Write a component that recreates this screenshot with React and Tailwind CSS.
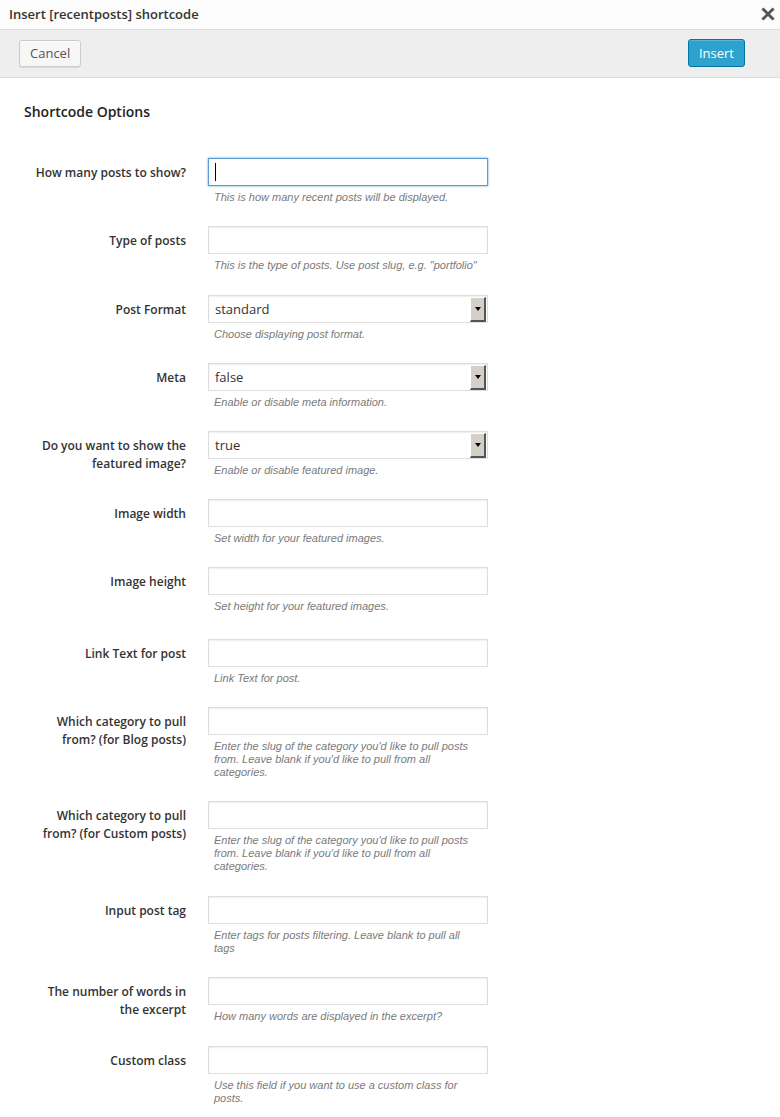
import React from "react";

const rows = [
  { label: ["How many posts to show?"], type: "focus", desc: ["This is how many recent posts will be displayed."] },
  { label: ["Type of posts"], type: "input", desc: ['This is the type of posts. Use post slug, e.g. "portfolio"'], mb: "mb-[1px]" },
  { label: ["Post Format"], type: "select", value: "standard", desc: ["Choose displaying post format."] },
  { label: ["Meta"], type: "select", value: "false", desc: ["Enable or disable meta information."] },
  { label: ["Do you want to show the", "featured image?"], type: "select", value: "true", desc: ["Enable or disable featured image."] },
  { label: ["Image width"], type: "input", desc: ["Set width for your featured images."] },
  { label: ["Image height"], type: "input", desc: ["Set height for your featured images."], mb: "mb-[4px]" },
  { label: ["Link Text for post"], type: "input", desc: ["Link Text for post."] },
  {
    label: ["Which category to pull", "from? (for Blog posts)"],
    type: "input",
    desc: ["Enter the slug of the category you'd like to pull posts", "from. Leave blank if you'd like to pull from all", "categories."],
  },
  {
    label: ["Which category to pull", "from? (for Custom posts)"],
    type: "input",
    desc: ["Enter the slug of the category you'd like to pull posts", "from. Leave blank if you'd like to pull from all", "categories."],
    mb: "mb-[1px]",
  },
  { label: ["Input post tag"], type: "input", desc: ["Enter tags for posts filtering. Leave blank to pull all", "tags"] },
  { label: ["The number of words in", "the excerpt"], type: "input", desc: ["How many words are displayed in the excerpt?"], mb: "mb-[1px]" },
  { label: ["Custom class"], type: "input", desc: ["Use this field if you want to use a custom class for", "posts."] },
];

const Field = ({ row }) => {
  if (row.type === "select") {
    return (
      <div className="flex h-[28px] w-[280px] items-center border border-[#ddd] bg-white shadow-[inset_0_1px_2px_rgba(0,0,0,0.07)]">
        <span className="flex-1 pl-[6px] pt-[2px] text-[13px] text-[#333]">{row.value}</span>
        <div className="mr-[1px] flex h-[25px] w-[16px] items-center justify-center border-t border-l border-b-2 border-r-2 border-t-white border-l-white border-b-[#555] border-r-[#555] bg-[#d4d0c8]">
          <div className="h-0 w-0 border-x-[3.5px] border-t-[4px] border-x-transparent border-t-black" />
        </div>
      </div>
    );
  }
  if (row.type === "focus") {
    return (
      <div className="flex h-[28px] w-[280px] items-center border border-[#5b9dd9] bg-white shadow-[0_0_2px_rgba(30,140,190,0.8)]">
        <div className="ml-[6px] h-[18px] w-px bg-black" />
      </div>
    );
  }
  return (
    <div className="h-[28px] w-[280px] border border-[#ddd] bg-white shadow-[inset_0_1px_2px_rgba(0,0,0,0.07)]" />
  );
};

const Row = ({ row }) => (
  <div className={`flex pb-[22px] ${row.mb || ""}`}>
    <div className="w-[186px] shrink-0 pt-[6px] text-right text-[12px] font-semibold leading-[18px] text-[#333]">
      {row.label.map((l) => (
        <div key={l} className="whitespace-nowrap">
          {l}
        </div>
      ))}
    </div>
    <div className="ml-[22px]">
      <Field row={row} />
      <div className="mt-[5px] pl-[6px] font-['Liberation_Sans',Arial,sans-serif] text-[11px] italic leading-[13px] text-[#7a7a7a]">
        {row.desc.map((d, i) => (
          <div key={i} className="whitespace-nowrap">
            {d}
          </div>
        ))}
      </div>
    </div>
  </div>
);

const App = () => {
  return (
    <div className="min-h-screen bg-white font-['Open_Sans',sans-serif] text-[#333]">
      <div className="flex h-[30px] items-center justify-between border-b border-[#ddd] bg-[#fcfcfc] pl-[9px] pr-[5px]">
        <span className="text-[13px] font-semibold">Insert [recentposts] shortcode</span>
        <svg width="14" height="14" viewBox="0 0 14 14" className="mt-[-1px]">
          <path d="M2.5 2.5 L11.5 11.5 M11.5 2.5 L2.5 11.5" stroke="#555" strokeWidth="3" strokeLinecap="square" />
        </svg>
      </div>

      <div className="flex h-[48px] items-center justify-between border-b border-[#ddd] bg-[#eee] pl-[19px] pr-[35px]">
        <button className="h-[27px] rounded-[3px] border border-[#ccc] bg-[#f7f7f7] px-[10px] text-[13px] text-[#555] shadow-[inset_0_1px_0_#fff,0_1px_0_rgba(0,0,0,0.08)]">
          Cancel
        </button>
        <button className="mt-[-1px] h-[28px] rounded-[3px] border border-[#0074a2] bg-[#2ea2cc] px-[10px] pt-[1px] text-[13px] text-white shadow-[inset_0_1px_0_rgba(120,200,230,0.5)]">
          Insert
        </button>
      </div>

      <div className="pt-[24px]">
        <h2 className="pl-[24px] text-[14px] font-semibold leading-[20px] text-[#222]">Shortcode Options</h2>
        <div className="mt-[36px]">
          {rows.map((row, i) => (
            <Row key={i} row={row} />
          ))}
        </div>
      </div>
    </div>
  );
};

export default App;
